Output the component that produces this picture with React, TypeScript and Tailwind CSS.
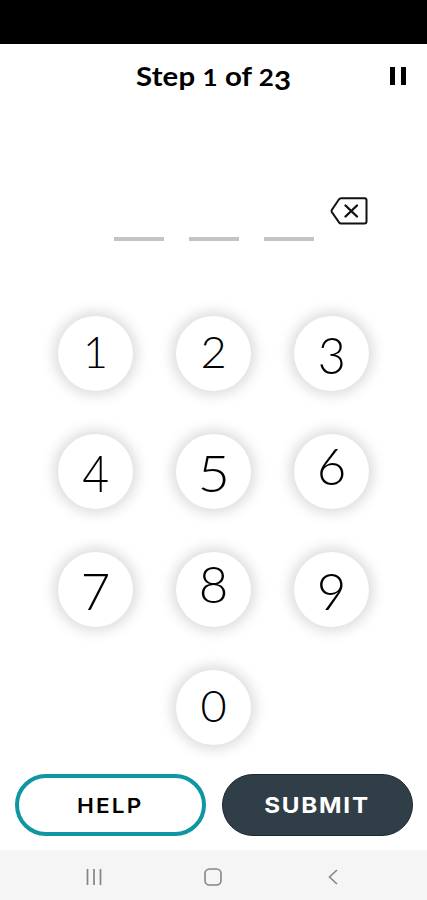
import clsx from "clsx";

// old-style figures: 0, 1 and 2 are small, the others rise or hang
const KEYS = [
  { digit: "1", style: "text-[43px] -translate-y-[2px]" },
  { digit: "2", style: "text-[43px] -translate-y-[2px] scale-x-105" },
  { digit: "3", style: "text-[51px] translate-y-[1px] scale-x-95" },
  { digit: "4", style: "text-[51px] translate-y-[1px] scale-x-[0.91]" },
  { digit: "5", style: "text-[51px] translate-y-[1px] scale-x-110" },
  { digit: "6", style: "text-[51px] -translate-y-[6px]" },
  { digit: "7", style: "text-[51px] translate-y-[1px]" },
  { digit: "8", style: "text-[51px] -translate-y-[6px]" },
  { digit: "9", style: "text-[51px] translate-y-[1px]" },
  { digit: "0", style: "text-[43px] -translate-y-[2px] scale-x-105" },
];

function Header() {
  return (
    <header className="relative h-[64px] flex justify-center items-center">
      <h1 className="font-['Lato'] text-[26px] leading-8 font-bold whitespace-pre scale-x-[1.13] tracking-[0.1px]">
        Step <span className="text-[23px]">1</span> of <span className="text-[23px]">2</span>
        <span className="inline-block translate-y-[4px]">3</span>
      </h1>
      <button aria-label="Pause" className="absolute right-[21px] top-[23px] flex gap-[6px]">
        <span className="w-[5px] h-[18px] bg-black" />
        <span className="w-[5px] h-[18px] bg-black" />
      </button>
    </header>
  );
}

function CodeEntry() {
  return (
    <div className="flex pl-[114px] pt-[89px] h-[208px]">
      <div className="flex gap-[25px] pt-[40px]">
        {[0, 1, 2].map((i) => (
          <span key={i} className="w-[50px] h-[4px] bg-[#c4c4c4]" />
        ))}
      </div>
      <button aria-label="Delete" className="ml-[16px] h-[28px]">
        <svg width="38" height="28" viewBox="0 0 38 28" fill="none" stroke="#111" strokeWidth="2">
          <path d="M11 1.2H34.5Q36.5 1.2 36.5 3.2V24.5Q36.5 26.5 34.5 26.5H11Q9.8 26.5 9 25.4L1.8 15Q1.2 14 1.8 13L9 2.3Q9.8 1.2 11 1.2Z" />
          <path d="M15.5 8.5L27 19.5M27 8.5L15.5 19.5" strokeWidth="2.4" strokeLinecap="round" />
        </svg>
      </button>
    </div>
  );
}

function Keypad() {
  return (
    <div className="grid grid-cols-[repeat(3,75px)] gap-[43px] justify-center">
      {KEYS.map(({ digit, style }) => (
        <button
          key={digit}
          className={clsx(
            "size-[75px] rounded-full bg-white flex items-center justify-center shadow-[0_0_14px_4px_rgba(0,0,0,0.15)]",
            digit === "0" && "col-start-2"
          )}
        >
          <span className={clsx("font-['Lato'] font-light leading-none text-black", style)}>{digit}</span>
        </button>
      ))}
    </div>
  );
}

function NavBar() {
  return (
    <nav className="mt-auto h-[50px] pt-[3px] bg-[#f5f5f5] flex items-center pl-[86px]">
      <svg width="16" height="16" viewBox="0 0 16 16" stroke="#858585" strokeWidth="1.7">
        <path d="M1.5 0V16M8 0V16M14.5 0V16" />
      </svg>
      <svg className="ml-[102px]" width="18" height="18" viewBox="0 0 18 18" fill="none" stroke="#858585" strokeWidth="1.6">
        <rect x="1" y="1" width="16" height="16" rx="4.5" />
      </svg>
      <svg className="ml-[106px]" width="10" height="16" viewBox="0 0 10 16" fill="none" stroke="#858585" strokeWidth="1.6">
        <path d="M9 1L1.5 8L9 15" />
      </svg>
    </nav>
  );
}

export default function App() {
  return (
    <div className="w-full h-screen flex flex-col bg-white text-black overflow-hidden">
      <div className="h-[44px] bg-black" />
      <Header />
      <CodeEntry />
      <Keypad />
      <div className="mt-[29px] pl-[15px] flex gap-4 font-['Inter']">
        <button className="w-[191px] h-[62px] rounded-full border-4 border-[#1095a3] text-[20.5px] font-semibold tracking-[2px]">
          <span className="inline-block scale-x-110 translate-y-px">HELP</span>
        </button>
        <button className="w-[191px] h-[62px] rounded-full bg-[#303e48] border border-[#1c2833] text-white text-[22px] font-bold tracking-[1.6px]">
          <span className="inline-block scale-x-110">SUBMIT</span>
        </button>
      </div>
      <NavBar />
    </div>
  );
}
